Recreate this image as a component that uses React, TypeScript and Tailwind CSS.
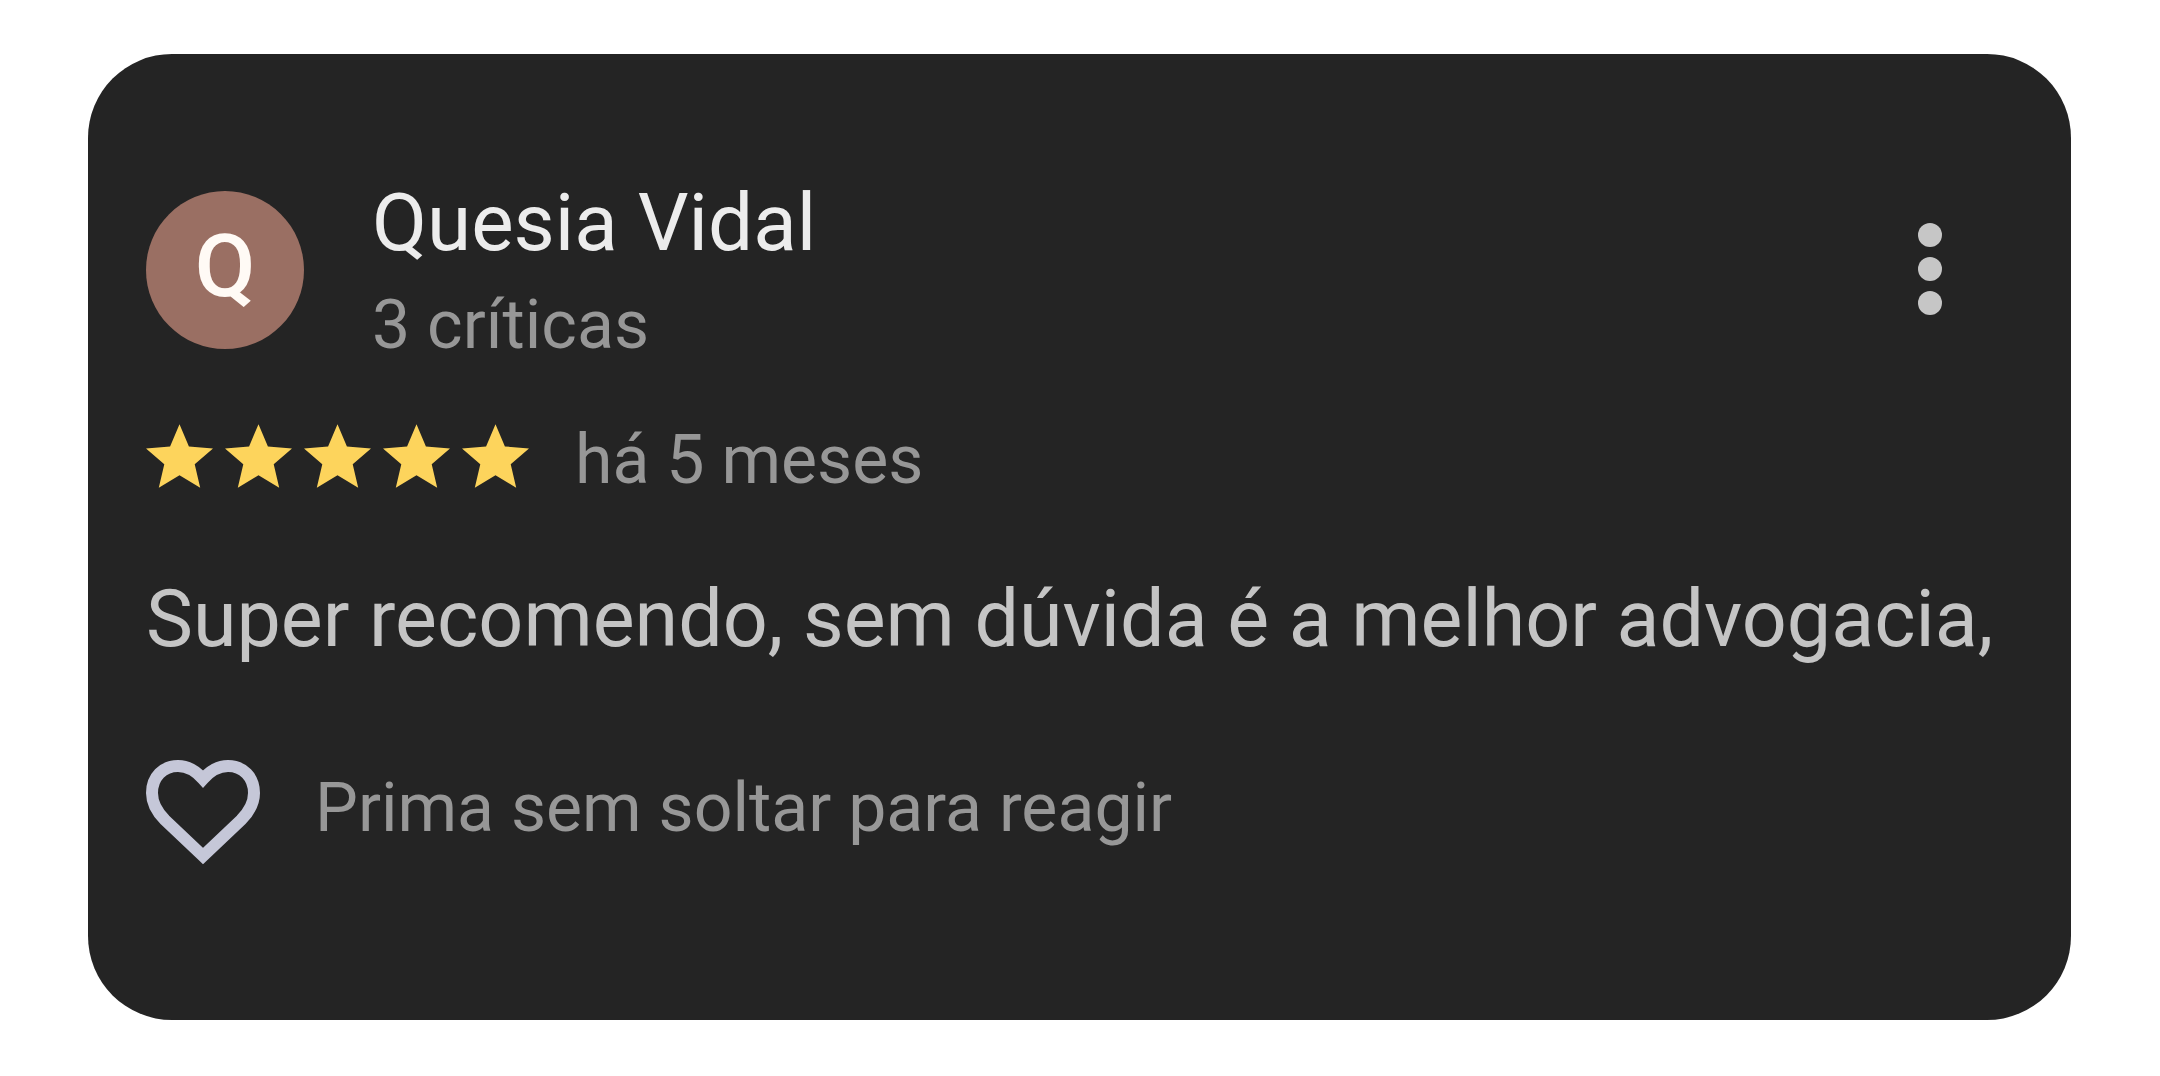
const star =
  'M12 17.27 18.18 21l-1.64-7.03L22 9.24l-7.19-.61L12 2 9.19 8.63 2 9.24l5.46 4.73L5.82 21z';
const heart =
  'M58 97 20 61C11 52 7 44 7 34 7 18 18 7 33 7c10 0 18 5 25 13C65 12 73 7 83 7c15 0 26 11 26 27 0 10-4 18-13 27z';

export default function App() {
  return (
    <main className="min-h-screen bg-white py-[54px] pr-[89px] pl-[88px] font-[Roboto,sans-serif]">
      <article className="rounded-[84px] bg-[#242424] px-[58px] pt-[117px] pb-[154px]">
        <header className="flex items-start">
          <div className="mt-[20px] flex size-[158px] shrink-0 items-center justify-center rounded-full bg-[#9a6f63] pb-2 text-[88px] font-medium text-[#fffaf5]">
            Q
          </div>
          <div className="ml-[68px] flex-1">
            <h1 className="text-[80px] leading-[104px] text-[#ececec]">Quesia Vidal</h1>
            <p className="text-[68px] leading-[100px] text-[#979797]">3 críticas</p>
          </div>
          <button type="button" aria-label="Mais opções" className="mt-[52px] mr-[57px] flex w-[52px] justify-center">
            <svg viewBox="0 0 24 92" className="h-[92px] w-6 fill-[#c6c6c6]">
              <circle cx="12" cy="12" r="12" />
              <circle cx="12" cy="46" r="12" />
              <circle cx="12" cy="80" r="12" />
            </svg>
          </button>
        </header>
        <div className="mt-[35px] flex items-center">
          <div role="img" aria-label="5 estrelas" className="flex gap-[12px] pb-2">
            {[1, 2, 3, 4, 5].map((n) => (
              <svg key={n} viewBox="2 2 20 19" className="h-[64px] w-[67px] fill-[#fdd45c]">
                <path d={star} />
              </svg>
            ))}
          </div>
          <p className="ml-[46px] text-[68px] leading-[100px] text-[#979797]">há 5 meses</p>
        </div>
        <p className="mt-[53px] text-[79px] leading-[112px] text-[#c4c4c4]">
          Super recomendo, sem dúvida é a melhor advogacia,
        </p>
        <div className="mt-[83px] flex items-center">
          <button type="button" aria-label="Reagir">
            <svg viewBox="1 0 114 106" className="h-[106px] w-[114px] fill-none stroke-[#c5c7d8]" strokeWidth="12">
              <path d={heart} />
            </svg>
          </button>
          <p className="ml-[55px] pb-2 text-[68px] leading-[100px] text-[#979797]">Prima sem soltar para reagir</p>
        </div>
      </article>
    </main>
  );
}
